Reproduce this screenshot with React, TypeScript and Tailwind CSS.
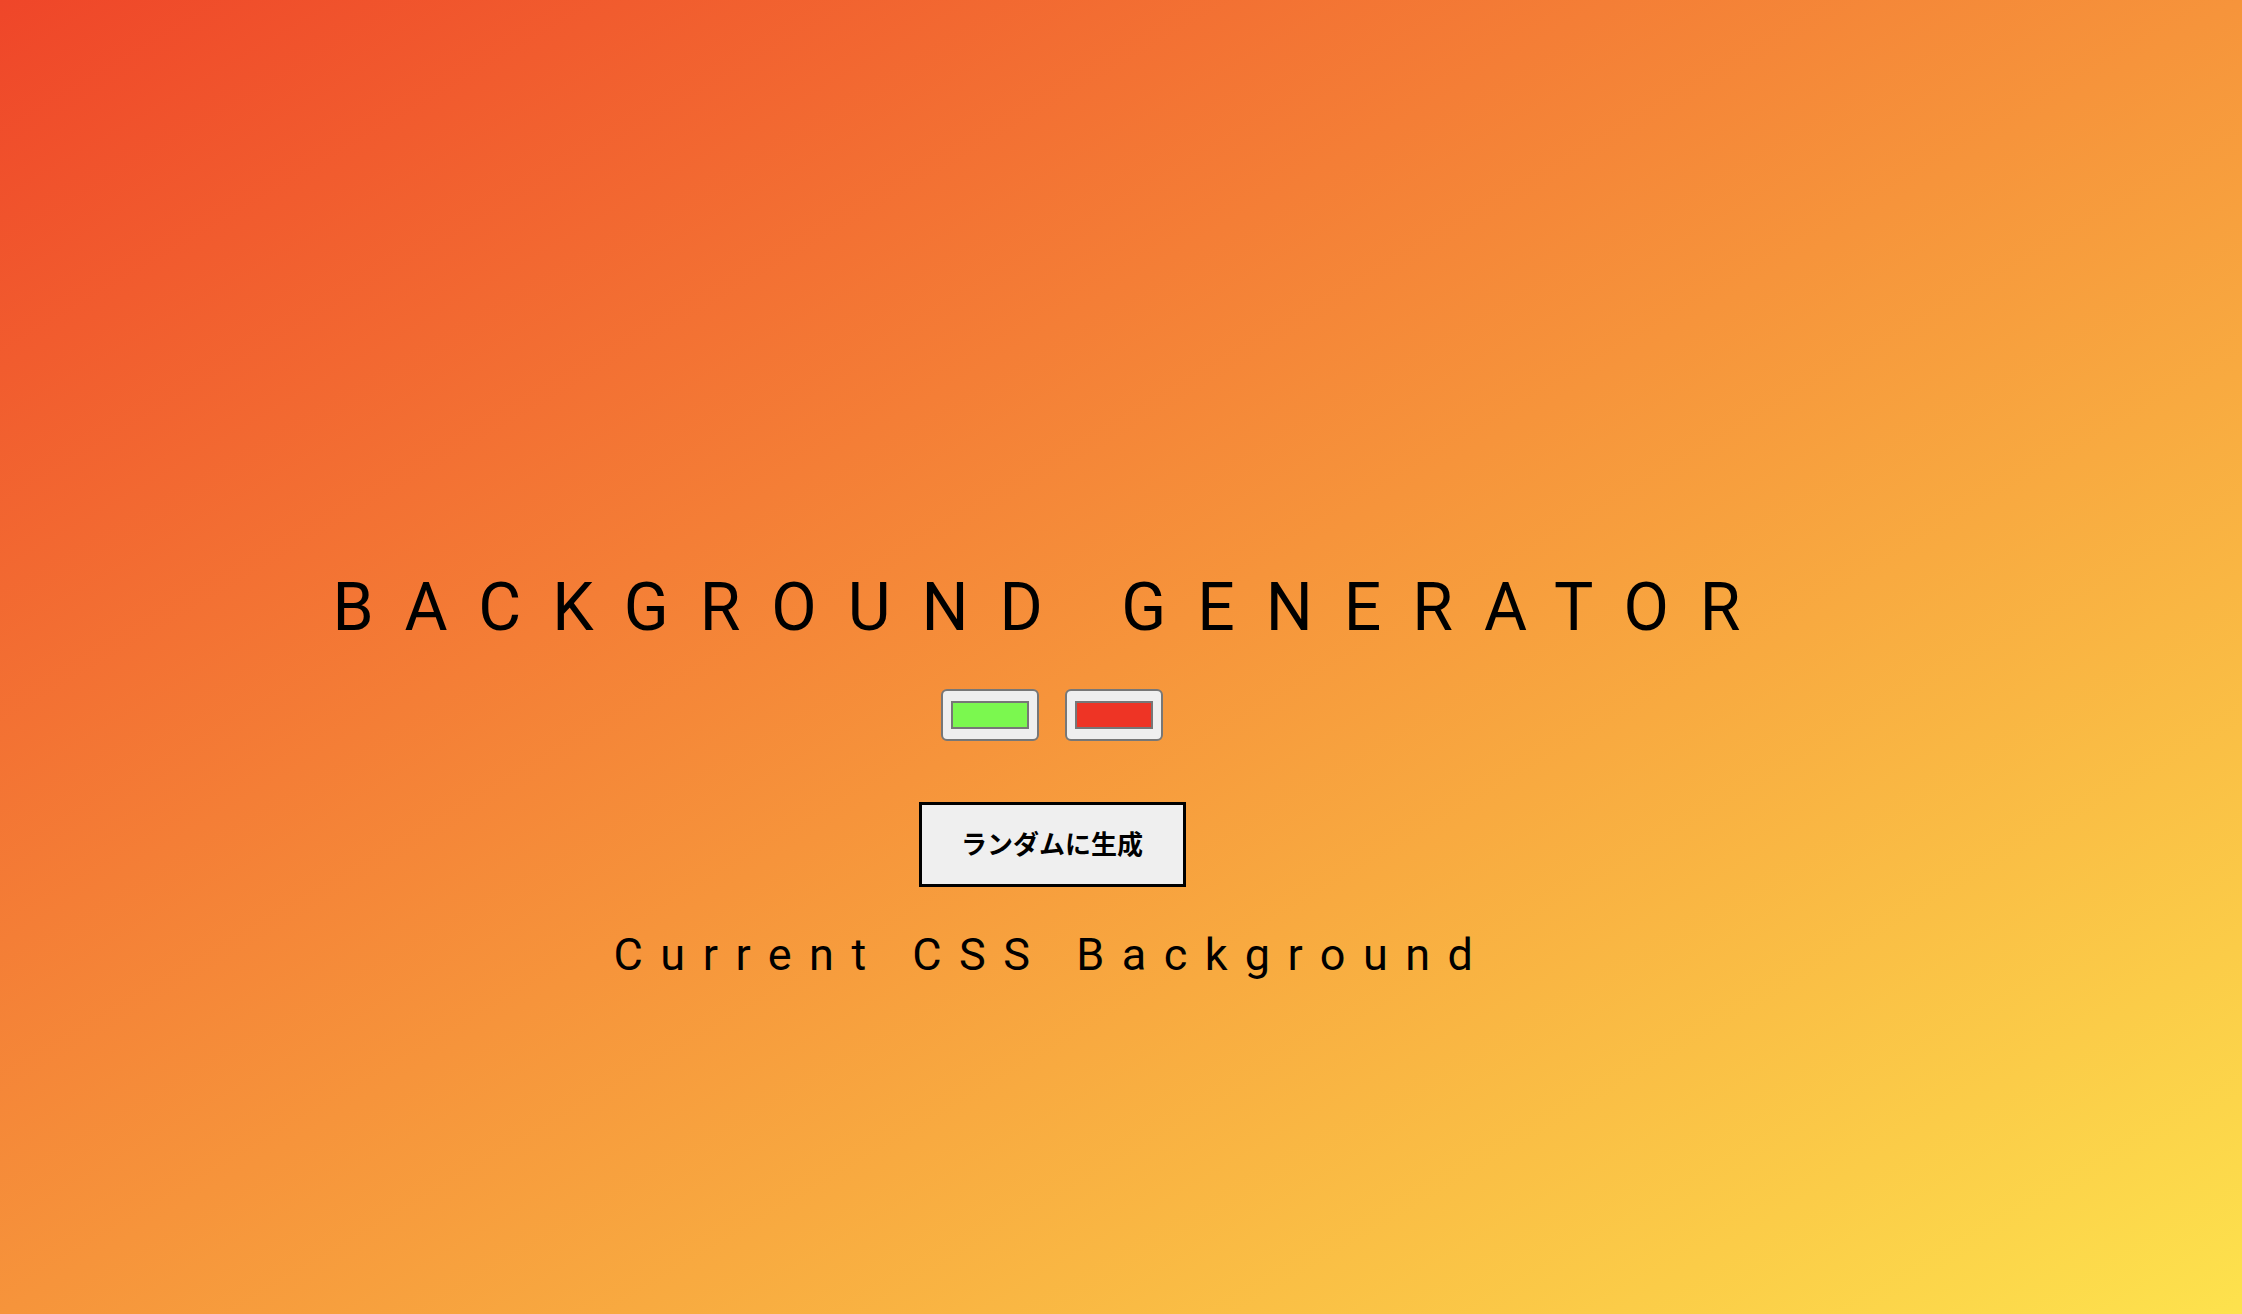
import * as React from 'react';

function Swatch({ color }: { color: string }) {
  return (
    <div className="w-[98px] h-[52px] rounded-[6px] border-2 border-[#777777] bg-[#efefef] flex items-center justify-center">
      <div className="w-[78px] h-[28px] border-2 border-[#777777]" style={{ backgroundColor: color }} />
    </div>
  );
}

export default function App() {
  return (
    <div className="min-h-screen w-full bg-[linear-gradient(to_bottom_right,#EF4629,#FDE24D)] font-['Roboto',sans-serif] text-black">
      <div className="w-[2100px] flex flex-col items-center pt-[575px] pb-[200px]">
        <h1 className="text-[66px] leading-[66px] font-normal tracking-[31px] whitespace-nowrap pl-[4px]">
          BACKGROUND GENERATOR
        </h1>

        <div className="flex items-center gap-[26px] mt-[48px] pl-[4px]">
          <Swatch color="#7BF84F" />
          <Swatch color="#EE3425" />
        </div>

        <button className="mt-[61px] w-[267px] h-[85px] border-[3px] border-black bg-[#efefef] text-[26px] leading-[26px] pb-[4px] font-bold font-['Noto_Sans_CJK_JP',sans-serif] ml-[4px]">
          ランダムに生成
        </button>

        <h3 className="mt-[45px] text-[45px] leading-[45px] font-normal tracking-[17.5px] whitespace-nowrap pl-[4px]">
          Current CSS Background
        </h3>
      </div>
    </div>
  );
}
